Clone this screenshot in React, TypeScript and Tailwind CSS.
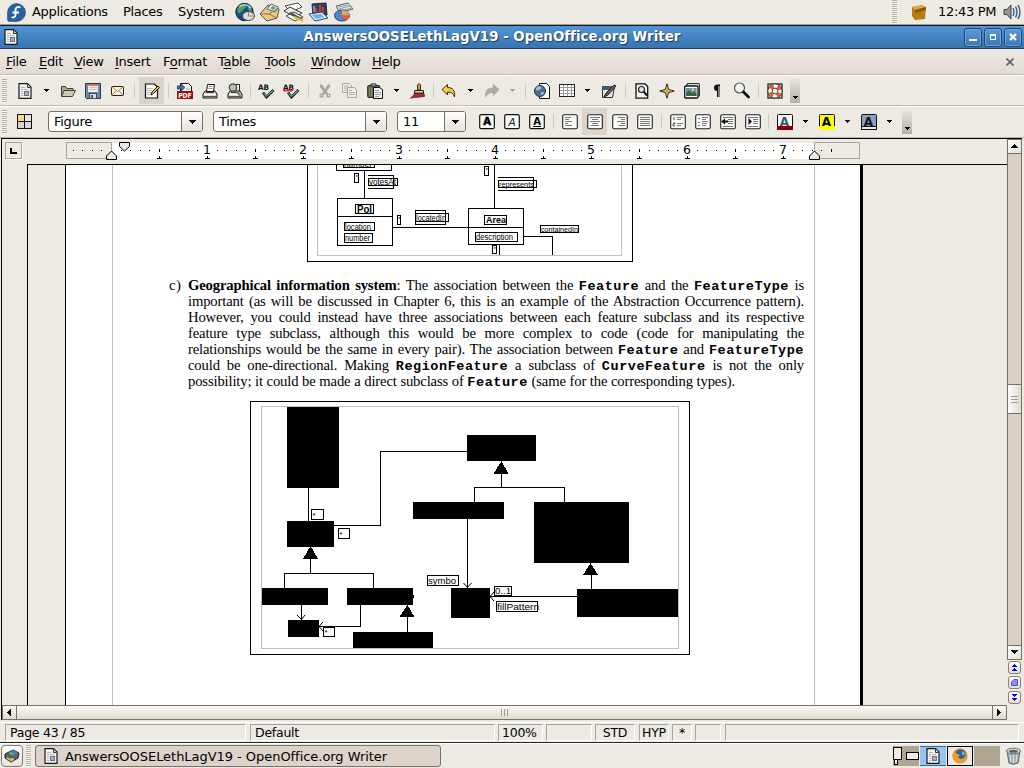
import React from "react";

type Kids = { children?: React.ReactNode };

/* ---------- small building blocks ---------- */

function Ico({ w = 16, h = 16, children }: Kids & { w?: number; h?: number }) {
  return (
    <svg width={w} height={h} viewBox={`0 0 ${w} ${h}`} className="shrink-0 block">
      {children}
    </svg>
  );
}

function Cell({ children, on = false }: Kids & { on?: boolean }) {
  return (
    <div className={on ? "w-[25px] h-[27px] shrink-0 flex items-center justify-center bg-[#dcd3c9]" : "w-[25px] h-[27px] shrink-0 flex items-center justify-center"}>
      {children}
    </div>
  );
}

function Sep({ className }: { className: string }) {
  return (
    <div className={`h-[15px] shrink-0 flex justify-center ${className}`}>
      <div className="w-px h-full bg-[#cfcac1]" />
    </div>
  );
}

function Arrow({ className, dim = false }: { className: string; dim?: boolean }) {
  return (
    <div className={`shrink-0 flex justify-center ${className}`}>
      <svg width="5" height="3" viewBox="0 0 5 3" shapeRendering="crispEdges">
        <path d="M0 0h5v1H4v1H3v1H2V2H1V1H0z" fill={dim ? "#aaa69e" : "#000"} />
      </svg>
    </div>
  );
}

function Grip({ className }: { className: string }) {
  return (
    <div className={`w-[5px] shrink-0 bg-[repeating-linear-gradient(to_bottom,#b5ab9d_0px,#b5ab9d_1px,#fbfaf7_1px,#fbfaf7_2px)] ${className}`} />
  );
}

function MoreTab() {
  return (
    <div className="w-[10px] h-[25px] shrink-0 bg-linear-to-b from-[#ebe8e1] to-[#b3afa7] flex flex-col justify-end items-center pb-[4px]">
      <Arrow className="w-[5px]" />
    </div>
  );
}

/* ---------- toolbar icons ---------- */

function DocIcon() {
  return (
    <Ico>
      <path d="M2 .6h8.500l3.500 3.500v11.300H2z" fill="#f3f3f0" stroke="#1a1a1a" strokeWidth="1.200" />
      <path d="M10.500 1v3.500h3" fill="#d5d5d0" stroke="#333" />
      <path d="M4 4.500h4M4 6.500h2M7 6.500h4M4 8.500h2M4 10.500h2M4 12.500h2" stroke="#b4b4b4" shapeRendering="crispEdges" />
      <rect x="7.500" y="8.500" width="4" height="4" fill="#a9adc0" stroke="#6b6f82" />
    </Ico>
  );
}

function OpenIcon() {
  return (
    <Ico>
      <path d="M1.500 13V3.500h4l1.500 2h6V7" fill="#a3a890" stroke="#3e4230" />
      <path d="M1.500 13.500L4 7.500h11.500l-3 6z" fill="#c9ccb4" stroke="#3e4230" />
    </Ico>
  );
}

function SaveIcon() {
  return (
    <Ico>
      <path d="M.5 .5h15v15h-14l-1-1z" fill="#6d8ba3" stroke="#293845" />
      <rect x="3" y="1" width="10" height="8" fill="#f2efeb" />
      <path d="M3 2h10" stroke="#d4705f" strokeWidth="2" />
      <path d="M4 4.500h8M4 6.500h8" stroke="#c4c4c4" />
      <rect x="4.500" y="10.500" width="7" height="5" fill="#d7dde1" stroke="#40515e" />
      <rect x="6" y="12" width="2" height="3" fill="#465764" />
    </Ico>
  );
}

function MailIcon() {
  return (
    <Ico w={14} h={12}>
      <rect x=".5" y="1.500" width="12" height="9" rx="1" fill="#fdf1d9" stroke="#2a2317" />
      <path d="M1 2l5.500 4.500L12 2M1 10l4-4M12 10L8 6" fill="none" stroke="#a98252" />
    </Ico>
  );
}

function EditIcon() {
  return (
    <Ico>
      <path d="M1.500 1h9l3 3v11h-12z" fill="#f8f8f6" stroke="#111" strokeWidth="1.200" />
      <path d="M3 5h6M3 7h5M3 9h4M3 11h3" stroke="#bbb" shapeRendering="crispEdges" />
      <path d="M7 12l1-3 6-6 1.500 1.500-6 6z" fill="#f4c430" stroke="#111" />
    </Ico>
  );
}

function PdfIcon() {
  return (
    <Ico>
      <path d="M3.500 8V.5h8l3 3V8" fill="#f6f6f3" stroke="#111" />
      <path d="M0 3h4V1l4 3.500L4 8V6H0z" fill="#3f6f9f" stroke="#16324e" strokeWidth=".7" />
      <path d="M9 6h4" stroke="#aaa" />
      <rect x="0" y="8" width="16" height="8" fill="#9c0d0d" />
      <text x="1.200" y="14.500" fontSize="7" fontWeight="700" fill="#fff" fontFamily="'DejaVu Sans', sans-serif" textLength="13.500" lengthAdjust="spacingAndGlyphs">PDF</text>
    </Ico>
  );
}

function PrinterBody() {
  return (
    <g>
      <path d="M3 8L1 11v4h14v-4l-2-3z" fill="#ddd9cf" stroke="#111" />
      <path d="M2 11.500h12" stroke="#fff" />
      <path d="M2 13.500h12" stroke="#55524b" />
      <path d="M4 9.500h8" stroke="#444" />
    </g>
  );
}

function PrintIcon() {
  return (
    <Ico>
      <PrinterBody />
      <path d="M4.500 8.500l1-7h7l-1 7z" fill="#fff" stroke="#111" />
      <path d="M6.500 3.500h4M6.500 5.500h4" stroke="#999" />
    </Ico>
  );
}

function PreviewIcon() {
  return (
    <Ico>
      <PrinterBody />
      <path d="M9 1.500h3.500v7" fill="#fff" stroke="#222" />
      <circle cx="6" cy="4.500" r="3.700" fill="#b9beb4" stroke="#4b4d49" strokeWidth="1.300" />
      <path d="M8.500 7.500l5 5" stroke="#77735f" strokeWidth="2" />
    </Ico>
  );
}

function SpellIcon({ auto = false }: { auto?: boolean }) {
  return (
    <Ico w={17} h={16}>
      <text x="0" y="6.500" fontSize="7.500" fontWeight="700" fill="#111" fontFamily="'DejaVu Sans', sans-serif" textLength="11" lengthAdjust="spacingAndGlyphs">AB</text>
      {auto && <path d="M0 8l1-1 1 1 1-1 1 1 1-1 1 1 1-1 1 1 1-1 1 1" fill="none" stroke="#d33" strokeWidth="1.300" />}
      <path d="M5 9.500l3.500 4.500L15.500 7" fill="none" stroke="#16251b" strokeWidth="2.800" />
      <path d="M5.500 10l3 3.300L15 7.500" fill="none" stroke="#7da288" strokeWidth="1.100" />
    </Ico>
  );
}

function CutIcon() {
  return (
    <Ico>
      <path d="M3 1l2.500 1L8 6l2.500-4L13 1v3L9.700 8.500l1.300 2h2.500v4H9.500V12L8 10.500 6.500 12v2.500h-4v-4H5l1.300-2L3 4z" fill="#aca89f" />
      <path d="M4.500 12v1M11.500 12v1" stroke="#fff" />
    </Ico>
  );
}

function CopyIcon() {
  return (
    <Ico w={17} h={17}>
      <g fill="#efede7" stroke="#a9a59d">
        <path d="M1.500 1.500h7l2 2v7h-9z" />
        <path d="M6.500 5.500h7l2 2v8h-9z" />
      </g>
      <path d="M3 4h5M3 6h3M3 8h3M8 8.500h3M8 10.500h6M8 12.500h6" stroke="#b5b1a9" />
    </Ico>
  );
}

function PasteIcon() {
  return (
    <Ico>
      <rect x=".7" y="2.500" width="12" height="12" rx="1" fill="#696a4e" stroke="#24251a" />
      <path d="M4 3V1h5v2z" fill="#ddd" stroke="#222" />
      <path d="M2.500 5v8M4.500 5v8" stroke="#85866a" />
      <path d="M6.500 4.500h6l3 2v9h-9z" fill="#f5f5f2" stroke="#111" />
      <path d="M8 7.500h4M8 9.500h6M8 11.500h6M8 13.500h4" stroke="#999" />
    </Ico>
  );
}

function BrushIcon() {
  return (
    <Ico>
      <path d="M7.500 7V2l1.500-1.500L10.500 2v5z" fill="#d8a040" stroke="#3f2d12" />
      <path d="M4.500 10V7.500h9V10z" fill="#e6ddb8" stroke="#222" />
      <path d="M4 10.500h10l.5 3-14 1.500L4 12z" fill="#a2302a" stroke="#4d1512" strokeWidth=".7" />
    </Ico>
  );
}

function UndoIcon() {
  return (
    <Ico>
      <path d="M1 6.500L6.500 1.500v3c5 0 8 3 7 9.500-1-3.500-3-5-7-5v3z" fill="#f5cb4c" stroke="#3c2c0a" strokeLinejoin="round" />
    </Ico>
  );
}

function RedoIcon() {
  return (
    <Ico>
      <path d="M15.500 6.500L9 .5V4.500C3 4.500 0 8 1.500 15 3 11.500 5 10 9 10v3.500z" fill="#b0aca4" />
    </Ico>
  );
}

function LinkIcon() {
  return (
    <Ico>
      <path d="M5.500 .5h7l3 3v12h-10z" fill="#fff" stroke="#111" />
      <circle cx="6" cy="8" r="5.500" fill="#4b7198" stroke="#1d3147" />
      <path d="M2 5c2-2 4-2 5-1s-1 3-2 3-2 1-3 0zM7 9c2 0 3 0 3 1s-2 2-3 2z" fill="#a8bccb" />
    </Ico>
  );
}

function TableIcon() {
  return (
    <Ico>
      <rect x=".5" y="1.500" width="15" height="12" fill="#fff" stroke="#222" />
      <path d="M1 4.500h14M1 7.500h14M1 10.500h14M4.500 2v11M8.500 2v11M12.500 2v11" stroke="#9aa0a4" />
    </Ico>
  );
}

function DrawIcon() {
  return (
    <Ico>
      <path d="M1.500 3.500h12l-2 11h-10z" fill="#e4eaec" stroke="#333" />
      <rect x="1.500" y="3" width="12" height="4" fill="#3c5d75" />
      <path d="M3 14l2-4 8-8 2 1-8 9z" fill="#6f604b" stroke="#222" />
    </Ico>
  );
}

function FindIcon() {
  return (
    <Ico>
      <path d="M2 .8h9l2.700 2.700v11.700H2z" fill="#f5f5f2" stroke="#111" strokeWidth="1.300" />
      <circle cx="7.500" cy="6.500" r="3" fill="#dde4e6" stroke="#222" strokeWidth="1.200" />
      <path d="M9.500 8.500l3.500 4" stroke="#111" strokeWidth="2" />
    </Ico>
  );
}

function NavigatorIcon() {
  return (
    <Ico>
      <path d="M8 .8L9.600 6.400 15.200 8 9.600 9.600 8 15.200 6.400 9.600 .8 8l5.600-1.600z" fill="#f3cf7d" stroke="#32270f" />
      <path d="M8 3v10M3 8h10" stroke="#a07c34" strokeWidth=".6" />
    </Ico>
  );
}

function GalleryIcon() {
  return (
    <Ico>
      <path d="M3 3V.7h12.300V13H14" fill="#fff" stroke="#111" />
      <rect x=".7" y="3" width="13.300" height="12" rx="1" fill="#fff" stroke="#111" strokeWidth="1.300" />
      <rect x="2" y="5" width="10.500" height="8" fill="#6f94ad" />
      <path d="M2 13v-3l3-3 3 3 2-1.500 2.500 2V13z" fill="#3a6336" />
      <circle cx="9" cy="6.500" r="1" fill="#ffd" />
    </Ico>
  );
}

function PilcrowIcon() {
  return (
    <Ico w={8} h={14}>
      <path d="M4.500 .5H7v1.500H6.500V13h-1V2H5v11H4V7C1.500 7 1 5 1 3.700S1.700 .5 4.500 .5z" fill="#111" />
    </Ico>
  );
}

function ZoomIcon() {
  return (
    <Ico w={17} h={17}>
      <circle cx="6.500" cy="6" r="5" fill="#f4f6f6" stroke="#555" strokeWidth="1.200" />
      <path d="M4 4l2-1" stroke="#fff" strokeWidth="2" />
      <path d="M10.500 10l5 5" stroke="#111" strokeWidth="2.800" strokeLinecap="round" />
    </Ico>
  );
}

function HelpIcon() {
  return (
    <Ico>
      <rect x="1" y="1" width="14" height="14" fill="none" stroke="#333" strokeWidth="1.400" />
      <circle cx="8" cy="8" r="5" fill="none" stroke="#222" strokeWidth="5" />
      <circle cx="8" cy="8" r="5" fill="none" stroke="#f4f0ea" strokeWidth="3.600" />
      <circle cx="8" cy="8" r="5" fill="none" stroke="#dd5b3c" strokeWidth="3.600" strokeDasharray="3.927 3.927" strokeDashoffset="-1.960" />
    </Ico>
  );
}

function StylesIcon() {
  return (
    <Ico w={15} h={15}>
      <rect x="0" y="0" width="15" height="15" fill="#111" />
      <rect x="1" y="1" width="6" height="6" fill="#fbdc6e" />
      <rect x="8" y="1" width="6" height="6" fill="#e5e5e2" />
      <rect x="1" y="8" width="6" height="6" fill="#d5d5d2" />
      <rect x="8" y="8" width="6" height="6" fill="#d5d5d2" />
    </Ico>
  );
}

function LetterIcon({ kind }: { kind: "b" | "i" | "u" }) {
  return (
    <Ico>
      <rect x=".7" y=".7" width="14.600" height="14" rx="1.500" fill="#fbfbf9" stroke="#111" strokeWidth="1.200" />
      {kind === "b" && <text x="8" y="11.300" textAnchor="middle" fontSize="10" fontWeight="700" stroke="#000" strokeWidth=".5" fontFamily="'DejaVu Sans', sans-serif">A</text>}
      {kind === "i" && <text x="8" y="11.500" textAnchor="middle" fontSize="10.500" fontStyle="italic" fill="#222" fontFamily="'DejaVu Sans', sans-serif">A</text>}
      {kind === "u" && <text x="8" y="10.500" textAnchor="middle" fontSize="10" fontWeight="700" fontFamily="'DejaVu Sans', sans-serif">A</text>}
      {kind === "u" && <path d="M4 12.500h8" stroke="#000" />}
    </Ico>
  );
}

function LinesIcon({ d, extra }: { d: string; extra?: React.ReactNode }) {
  return (
    <Ico>
      <rect x=".7" y=".7" width="14.600" height="14" rx="1.500" fill="#fbfbf9" stroke="#222" strokeWidth="1.100" />
      <path d={d} stroke="#777" shapeRendering="crispEdges" />
      {extra}
    </Ico>
  );
}

function ColorIcon({ box, bar, ink, edge }: { box: string; bar: string; ink: string; edge: string }) {
  return (
    <Ico w={16} h={16}>
      <rect x=".5" y=".5" width="15" height="14" rx="1" fill={box} stroke="#111" />
      <text x="7.500" y="11.500" textAnchor="middle" fontSize="12" fontWeight="700" fill={ink} fontFamily="'DejaVu Sans', sans-serif">A</text>
      <rect x=".5" y="12.500" width="15" height="3" fill={bar} stroke={edge} />
    </Ico>
  );
}

/* ---------- desktop panel ---------- */

function FedoraLogo() {
  return (
    <Ico w={19} h={19}>
      <path d="M9.500 .5a9 9 0 1 1 0 18H2.500q-2 0-2-2V9.500a9 9 0 0 1 9-9z" fill="#285f9f" stroke="#1c467c" strokeWidth=".6" />
      <path d="M13.500 4.500c-3-1.500-5 0-5 2.500v5c0 2-2 3.200-4 2M5.500 9.500h6.500" fill="none" stroke="#fff" strokeWidth="1.900" />
    </Ico>
  );
}

function TopPanel() {
  return (
    <div className="h-[24px] shrink-0 flex items-center bg-[#edeae3] text-[13px] tracking-[-0.3px] pl-[7px] pr-[3px]">
      <FedoraLogo />
      <span className="w-[91px] ml-[6px]">Applications</span>
      <span className="w-[55px]">Places</span>
      <span className="w-[57px]">System</span>
      <div className="flex gap-[3px]">
        <Ico w={21} h={20}>
          <circle cx="9.500" cy="10" r="8.700" fill="#174e83" stroke="#14283a" />
          <path d="M2 8c2-5 6-6 8-5s2 2-1 4-3 5-6 4zM12 3c4 1 5 4 5 7l-3-1z" fill="#55a060" />
          <path d="M4 5c4-3 9-3 12 1" fill="none" stroke="#b7d8e6" strokeWidth="1.500" />
          <ellipse cx="13.500" cy="14" rx="6" ry="4.500" fill="#d9ddd9" stroke="#404644" />
          <path d="M13.500 10v4h5" fill="none" stroke="#888" />
        </Ico>
        <Ico w={21} h={20}>
          <path d="M1 12L9 3l11 4-2 9-10 3z" fill="#eac88d" stroke="#5d4a2b" />
          <path d="M8 7l4-5 7 3-3 5z" fill="#e3ecea" stroke="#5e6a67" />
          <path d="M11 6l3-2 3 2-3 2z" fill="#5e9c9c" />
          <path d="M1 12l9 0 8 4M10 12l8-5" fill="none" stroke="#92703c" />
        </Ico>
        <Ico w={22} h={20}>
          <path d="M2 4L15 1l4 4-11 5z" fill="#fff" stroke="#444" />
          <path d="M1 9l6-4 12 6-7 4z" fill="#e8e8e4" stroke="#333" />
          <path d="M3 14l8-4 9 5-8 4z" fill="#fbfbf9" stroke="#444" />
          <path d="M5 12l13 6 2-1L8 10z" fill="#555" />
          <path d="M11 15l9 4" stroke="#eabf2b" strokeWidth="2" />
        </Ico>
        <Ico w={21} h={20}>
          <path d="M4 2l14-1 1 12-14 1z" fill="#32405f" stroke="#1c263c" />
          <path d="M8 6v6M12 3v9M15 5v7" stroke="#bd4040" strokeWidth="2" />
          <path d="M6 4v6" stroke="#7993bd" strokeWidth="2" />
          <path d="M1 12l13-2 6 6-13 3z" fill="#d6e7f6" stroke="#32475d" />
          <path d="M4 13l9-1 3 3-8 2z" fill="#65aef0" />
        </Ico>
        <Ico w={22} h={20}>
          <path d="M4 4l12-3 5 6-13 4z" fill="#e0e4ec" stroke="#5a6471" />
          <path d="M6 5l10-2M7 7l11-3M8 9l12-3" stroke="#8e9cae" />
          <ellipse cx="10" cy="13.500" rx="7.500" ry="5.500" fill="#5587c6" stroke="#26466f" />
          <path d="M10 13.500V8a7.500 5.500 0 0 1 7.500 5.500z" fill="#f19f53" />
          <path d="M10 13.500h7.500a7 5.500 0 0 1-5 5z" fill="#e65a36" />
        </Ico>
      </div>
      <div className="grow" />
      <Grip className="h-[24px]" />
      <div className="w-[14px]" />
      <Ico w={16} h={17}>
        <path d="M1 3l10-2 4 2-1 12-10 1-3-4z" fill="#b67a14" />
        <path d="M1 3l10-2 4 2-11 3z" fill="#e1a93e" />
        <path d="M4 6l11-3v3L4 9z" fill="#8b560b" />
      </Ico>
      <span className="ml-[11px] w-[65px] whitespace-nowrap">12:43 PM</span>
      <Ico w={18} h={18}>
        <path d="M1 6.500h3l4-4.500v14l-4-4.500H1z" fill="#949893" stroke="#444" />
        <path d="M10 5q2 4 0 8M12.500 3.500q3 5.500 0 11M15 2q4 7 0 14" fill="none" stroke="#315c91" strokeWidth="1.400" />
      </Ico>
    </div>
  );
}

/* ---------- window chrome ---------- */

function WinButton({ children }: Kids) {
  return (
    <div className="w-[18px] h-[19px] rounded-[3px] border border-[#20486e] bg-linear-to-b from-[#5b99d9] to-[#3b78b3] flex items-center justify-center shadow-[inset_0_0_0_1px_#6ba5dd]">
      {children}
    </div>
  );
}

function TitleBar() {
  return (
    <div className="h-[24px] shrink-0 border-t border-b border-t-[#101a24] border-b-[#23405e] bg-linear-to-b from-[#5294d8] to-[#3974ae] flex items-center pl-[3px] pr-[2px]">
      <DocIcon />
      <div className="grow pl-px text-center font-bold text-white text-[13.33px] tracking-[0.03px] leading-[20px] [text-shadow:1px_1px_1px_#1b3c60]">
        AnswersOOSELethLagV19 - OpenOffice.org Writer
      </div>
      <div className="flex gap-[2px]">
        <WinButton>
          <div className="w-[8px] h-[2px] bg-white mt-[6px]" />
        </WinButton>
        <WinButton>
          <div className="w-[6px] h-[6px] border border-t-2 border-white" />
        </WinButton>
        <WinButton>
          <Ico w={8} h={8}>
            <path d="M1 1l6 6M7 1L1 7" stroke="#fff" strokeWidth="2.300" />
          </Ico>
        </WinButton>
      </div>
    </div>
  );
}

function Menu({ pre = "", u, rest, className }: { pre?: string; u: string; rest: string; className: string }) {
  return (
    <span className={`shrink-0 whitespace-nowrap ${className}`}>
      {pre}
      <span className="underline underline-offset-2">{u}</span>
      {rest}
    </span>
  );
}

function MenuBar() {
  return (
    <div className="h-[26px] shrink-0 flex items-center pl-[6px] text-[13px] tracking-[-0.3px] bg-linear-to-b from-[#edeae5] to-[#e2dad2] border-b border-[#c4bcac]">
      <Menu u="F" rest="ile" className="w-[33px]" />
      <Menu u="E" rest="dit" className="w-[35px]" />
      <Menu u="V" rest="iew" className="w-[41px]" />
      <Menu u="I" rest="nsert" className="w-[48px]" />
      <Menu pre="F" u="o" rest="rmat" className="w-[55px]" />
      <Menu pre="T" u="a" rest="ble" className="w-[47px]" />
      <Menu u="T" rest="ools" className="w-[46px]" />
      <Menu u="W" rest="indow" className="w-[61px]" />
      <Menu u="H" rest="elp" className="w-[30px]" />
      <div className="grow" />
      <div className="mr-[10px]">
        <Ico w={8} h={8}>
          <path d="M.5 .5l7 7M7.500 .5l-7 7" stroke="#5c6172" strokeWidth="1.600" />
        </Ico>
      </div>
    </div>
  );
}

function StandardBar() {
  return (
    <div className="h-[31px] shrink-0 flex items-center border-t border-white border-b border-b-[#c4bcac] bg-[#edeae3] pl-[2px]">
      <Grip className="h-[24px] mr-[5px]" />
      <Cell><DocIcon /></Cell>
      <Arrow className="w-[18px]" />
      <Cell><OpenIcon /></Cell>
      <Cell><SaveIcon /></Cell>
      <Cell><MailIcon /></Cell>
      <Sep className="w-[9px]" />
      <Cell on><EditIcon /></Cell>
      <Sep className="w-[8px]" />
      <Cell><PdfIcon /></Cell>
      <Cell><PrintIcon /></Cell>
      <Cell><PreviewIcon /></Cell>
      <Sep className="w-[7px]" />
      <Cell><SpellIcon /></Cell>
      <Cell><SpellIcon auto /></Cell>
      <Sep className="w-[8px]" />
      <Cell><CutIcon /></Cell>
      <Cell><CopyIcon /></Cell>
      <Cell><PasteIcon /></Cell>
      <Arrow className="w-[18px]" />
      <Cell><BrushIcon /></Cell>
      <Sep className="w-[6px]" />
      <Cell><UndoIcon /></Cell>
      <Arrow className="w-[18px]" />
      <Cell><RedoIcon /></Cell>
      <Arrow className="w-[17px]" dim />
      <Sep className="w-[8px]" />
      <Cell><LinkIcon /></Cell>
      <Cell><TableIcon /></Cell>
      <Arrow className="w-[17px]" />
      <Cell><DrawIcon /></Cell>
      <Sep className="w-[8px]" />
      <Cell><FindIcon /></Cell>
      <Cell><NavigatorIcon /></Cell>
      <Cell><GalleryIcon /></Cell>
      <Cell><PilcrowIcon /></Cell>
      <Cell><ZoomIcon /></Cell>
      <Sep className="w-[8px]" />
      <Cell><HelpIcon /></Cell>
      <div className="w-[3px]" />
      <MoreTab />
    </div>
  );
}

function Combo({ text, className }: { text: string; className: string }) {
  return (
    <div className={`h-[21px] shrink-0 flex rounded-[3px] border border-[#7b7060] bg-white overflow-hidden ${className}`}>
      <span className="grow pl-[5px] text-[13px] tracking-[-0.3px] leading-[19px]">{text}</span>
      <div className="w-[21px] shrink-0 border-l border-[#7b7060] bg-linear-to-b from-white to-[#e6e1da] flex items-center">
        <svg width="20" height="5" viewBox="0 0 20 5" shapeRendering="crispEdges">
          <path d="M7 1h7v1h-1v1h-1v1h-1v1h-1V4H9V3H8V2H7z" fill="#000" />
        </svg>
      </div>
    </div>
  );
}

function FormatBar() {
  return (
    <div className="h-[31px] shrink-0 flex items-center border-t border-white bg-[#edeae3] pl-[2px] pb-px">
      <Grip className="h-[24px] mr-[5px]" />
      <Cell><StylesIcon /></Cell>
      <Combo text="Figure" className="w-[155px] ml-[11px]" />
      <Combo text="Times" className="w-[174px] ml-[10px]" />
      <Combo text="11" className="w-[69px] ml-[10px]" />
      <div className="w-[8px]" />
      <Cell><LetterIcon kind="b" /></Cell>
      <Cell><LetterIcon kind="i" /></Cell>
      <Cell><LetterIcon kind="u" /></Cell>
      <Sep className="w-[8px]" />
      <Cell><LinesIcon d="M3 3.500h6M3 5.500h4M3 7.500h7M3 9.500h3M3 11.500h7" /></Cell>
      <Cell on><LinesIcon d="M3 3.500h10M5 5.500h6M3 7.500h10M5 9.500h6M4 11.500h8" /></Cell>
      <Cell><LinesIcon d="M6 3.500h7M9 5.500h4M5 7.500h8M9 9.500h4M7 11.500h6" /></Cell>
      <Cell><LinesIcon d="M3 3.500h10M3 5.500h10M3 7.500h10M3 9.500h10M3 11.500h10" /></Cell>
      <Sep className="w-[8px]" />
      <Cell><LinesIcon d="M7 3.500h6M7 5.500h4M7 9.500h6M7 11.500h4" extra={<path d="M4 3v3M3 9h2v1H3v2h2" fill="none" stroke="#555" />} /></Cell>
      <Cell><LinesIcon d="M7 3.500h6M7 5.500h4M7 7.500h6M7 9.500h5M7 11.500h4M3 4.500h2M3 8.500h2M3 11.500h2" /></Cell>
      <Cell><LinesIcon d="M3 3.500h10M8 5.500h5M8 7.500h5M8 9.500h5M3 12.500h10" extra={<path d="M1 7.500L5 4.500v2h3v2H5v2z" fill="#111" />} /></Cell>
      <Cell><LinesIcon d="M3 3.500h10M8 5.500h5M8 7.500h5M8 9.500h5M3 12.500h10" extra={<path d="M7 7.500L3.500 4v7z" fill="#111" />} /></Cell>
      <Sep className="w-[7px]" />
      <Cell><ColorIcon box="#f8f8f6" bar="#8b0000" ink="#3e5878" edge="#8b0000" /></Cell>
      <Arrow className="w-[17px]" />
      <Cell><ColorIcon box="#ffff00" bar="#ffff00" ink="#000" edge="#ffff00" /></Cell>
      <Arrow className="w-[17px]" />
      <Cell><ColorIcon box="#85a1c4" bar="#ece9e2" ink="#111" edge="#111" /></Cell>
      <Arrow className="w-[17px]" />
      <div className="w-[4px]" />
      <MoreTab />
    </div>
  );
}

/* ---------- ruler ---------- */

const ORIGIN = 111;
const RULER_STEPS = Array.from({ length: 80 }, (_, i) => i - 4);

function Ruler() {
  return (
    <div className="h-[25px] shrink-0 flex items-start">
      <div className="w-[17px] h-[17px] ml-[3px] mt-[3px] border border-[#aaa69d] shadow-[1px_1px_0_#fff] flex items-center justify-center">
        <div className="w-[7px] h-[6px] border-l-2 border-b-2 border-black" />
      </div>
      <svg width="796" height="25" viewBox="66 139 796 25" className="ml-[44px]" shapeRendering="crispEdges">
        <rect x="111" y="143" width="704" height="16" fill="#fff" />
        <rect x="66.500" y="142.500" width="45" height="16" fill="#edeae3" stroke="#a9a59d" />
        <rect x="814.500" y="142.500" width="45" height="16" fill="#edeae3" stroke="#a9a59d" />
        {RULER_STEPS.map((k) => {
          const x = Math.round(ORIGIN + k * 9.6);
          if (k === 0 || x > 852) return null;
          if (k % 10 === 0)
            return (
              <text key={k} x={x} y="154" textAnchor="middle" fontSize="12.500" shapeRendering="auto" fontFamily="'DejaVu Sans', sans-serif">
                {k / 10}
              </text>
            );
          return k % 5 === 0 ? (
            <rect key={k} x={x} y="149" width="1" height="3" />
          ) : (
            <rect key={k} x={x} y="150" width="1" height="1" />
          );
        })}
        {Array.from({ length: 14 }, (_, i) => 159 + i * 48).map((x) => (
          <path key={x} d={`M${x - 2} 158h5v1h-5zM${x} 156h1v2h-1z`} />
        ))}
        <g fill="#edeae3" stroke="#000" shapeRendering="auto">
          <path d="M119.500 142.500h10v4l-5 4.500-5-4.500z" />
          <path d="M106.500 159.500v-3.500l5-5 5 5v3.500z" />
          <path d="M809.500 159.500v-3.500l5-5 5 5v3.500z" />
        </g>
      </svg>
    </div>
  );
}

/* ---------- figures inside the document ---------- */

function Label({ x, y, w, t, s = 8, b = false }: { x: number; y: number; w: number; t: string; s?: number; b?: boolean }) {
  return (
    <text x={x} y={y} fontSize={s} fontWeight={b ? 700 : 400} textLength={w} lengthAdjust="spacingAndGlyphs" fontFamily="'Liberation Sans', sans-serif" fill="#000">
      {t}
    </text>
  );
}

function PollFigure() {
  return (
    <svg width="326" height="97" viewBox="307 165 326 97" className="block ml-[241px]">
      <g fill="none" stroke="#000" shapeRendering="crispEdges">
        <path d="M317.500 165v90.500h304V165" stroke="#c0c0c0" />
        <path d="M307.500 165v96.500h325V165" />
        <path d="M336.500 165v5.500h55V165M343.500 165v2.500h31V165" />
        <path d="M364.500 170v28M494.500 165v43M392 227.500h76M523 236.500h29.500V255M499.500 244v11" />
        <rect x="354.500" y="173.500" width="4" height="9" />
        <path d="M368 175.500h25.500v13H368M368.500 178.500h29v7h-29z" />
        <rect x="337.500" y="198.500" width="55" height="47" />
        <path d="M337 216.500h55" />
        <rect x="355.500" y="204.500" width="18" height="9" />
        <rect x="344.500" y="222.500" width="30" height="8" />
        <rect x="344.500" y="233.500" width="28" height="9" />
        <rect x="397.500" y="215.500" width="3" height="9" />
        <rect x="415.500" y="210.500" width="30" height="14" />
        <rect x="415.500" y="213.500" width="33" height="8" />
        <rect x="468.500" y="208.500" width="55" height="36" />
        <path d="M468 227.500h55" />
        <rect x="484.500" y="215.500" width="22" height="9" />
        <rect x="475.500" y="232.500" width="42" height="9" />
        <rect x="484.500" y="166.500" width="4" height="9" />
        <path d="M498 177.500h35.500v13H498M498.500 180.500h38v7h-38z" />
        <rect x="540.500" y="225.500" width="38" height="7" />
        <rect x="492.500" y="245.500" width="4" height="8" />
      </g>
      <Label x={344} y={166.500} w={28} t="number" />
      <Label x={355.500} y={179} w={2.500} t="*" s={6} />
      <Label x={369} y={185} w={27} t="votesAt" s={8.500} />
      <Label x={357} y={212.500} w={15} t="Pol" s={10} b />
      <Label x={345} y={229.500} w={26} t="location" s={8.500} />
      <Label x={345} y={241} w={25} t="number" s={8.500} />
      <Label x={398} y={221} w={2.500} t="*" s={6} />
      <Label x={416} y={220.500} w={30} t="locatedIn" s={8.500} />
      <Label x={486} y={223} w={20} t="Area" s={9.500} b />
      <Label x={476} y={240} w={37} t="description" s={8.500} />
      <Label x={485.500} y={172} w={2.500} t="*" s={6} />
      <Label x={499} y={187} w={35} t="represents" />
      <Label x={541} y={232} w={37} t="containedIn" />
      <Label x={493.500} y={251} w={2.500} t="*" s={6} />
    </svg>
  );
}

function FeatureFigure() {
  return (
    <svg width="440" height="254" viewBox="250 401 440 254" className="block ml-[184px] mt-[12px]">
      <g fill="none" stroke="#000" shapeRendering="crispEdges">
        <rect x="250.500" y="401.500" width="439" height="253" />
        <rect x="261.500" y="406.500" width="417" height="242" stroke="#c0c0c0" />
        <path d="M308.500 488v33M334 525.500h46.500v-74H467M310.500 558v15M284.500 588v-14.500h89V588M301.500 605v15M360.500 605v21.500H319M407.500 615v17" />
        <path d="M501.500 473v14M474.500 502v-14.500h90V502M467.500 519v69M591.500 574v15M490 596.500h87" />
        <rect x="311.500" y="509.500" width="12" height="10" />
        <rect x="338.500" y="528.500" width="11" height="10" />
        <rect x="323.500" y="627.500" width="11" height="9" />
        <rect x="427.500" y="575.500" width="31" height="10" />
        <rect x="494.500" y="586.500" width="17" height="9" />
        <rect x="496.500" y="601.500" width="41" height="10" />
      </g>
      <g fill="none" stroke="#000">
        <path d="M297 615l4.500 4.500L305 615M323 622l-4 4.500 4 4.500M463.500 583l4 4.500 4-4.500M494 592l-4 4.500 4 4.500" />
      </g>
      <g fill="#000" shapeRendering="crispEdges">
        <path d="M287 407h52v81h-52zM287 521h47v26h-47zM262 588h66v17h-66zM347 588h66v17h-66zM288 620h31v17h-31zM353 632h80v16h-80z" />
        <path d="M467 435h69v26h-69zM413 502h91v17h-91zM534 502h95v61h-95zM451 588h39v30h-39zM577 589h101v28H577zM413 595h1v3h-1z" />
        <path d="M310.500 546l7.500 13h-15zM407.500 605l7 12h-15zM501.500 461l7 13h-15zM590.500 563l7.500 12h-15z" />
      </g>
      <Label x={312.500} y={517.500} w={3} t="*" s={8} />
      <Label x={339.500} y={536.500} w={3} t="*" s={8} />
      <Label x={324.500} y={634.500} w={3} t="*" s={8} />
      <Label x={428} y={584} w={28} t="symbo" s={9.500} />
      <Label x={495} y={594} w={16} t="0..1" s={9.500} />
      <Label x={497} y={610} w={42} t="fillPattern" s={9.500} />
    </svg>
  );
}

function Code({ children }: Kids) {
  return <b className="font-['Liberation_Mono','Courier_New',monospace] text-[13.5px] tracking-[0.54px] leading-[14px]">{children}</b>;
}

function Line({ children, className = "w-[616px]" }: Kids & { className?: string }) {
  return <div className={`h-[16px] leading-[16px] whitespace-nowrap [text-align-last:justify] ${className}`}>{children}</div>;
}

function Paragraph() {
  return (
    <div className="mt-[15px] ml-[102px] flex text-[14.67px] tracking-[-0.15px] font-['Liberation_Serif','Times_New_Roman',serif] text-black">
      <div className="w-[20px] pl-px leading-[16px] tracking-[0.5px]">c)</div>
      <div>
        <Line><b>Geographical information system</b>: The association between the <Code>Feature</Code> and the <Code>FeatureType</Code> is</Line>
        <Line>important (as will be discussed in Chapter 6, this is an example of the Abstraction Occurrence pattern).</Line>
        <Line>However, you could instead have three associations between each feature subclass and its respective</Line>
        <Line>feature type subclass, although this would be more complex to code (code for manipulating the</Line>
        <Line>relationships would be the same in every pair). The association between <Code>Feature</Code> and <Code>FeatureType</Code></Line>
        <Line>could be one-directional. Making <Code>RegionFeature</Code> a subclass of <Code>CurveFeature</Code> is not the only</Line>
        <Line className="w-[547px]">possibility; it could be made a direct subclass of <Code>Feature</Code> (same for the corresponding types).</Line>
      </div>
    </div>
  );
}

function DocumentView() {
  return (
    <div className="h-[541px] shrink-0 flex">
      <div className="w-[25px] shrink-0" />
      <div className="w-[980px] shrink-0 flex border-l border-t border-black">
        <div className="w-[37px] shrink-0" />
        <div className="w-[798px] shrink-0 bg-white border-l border-r-[3px] border-black overflow-hidden flex bg-[linear-gradient(#c0c0c0,#c0c0c0),linear-gradient(#c0c0c0,#c0c0c0)] bg-[length:1px_100%] bg-no-repeat bg-[position:46px_0px,748px_0px]">
          <div className="shrink-0">
            <PollFigure />
            <Paragraph />
            <FeatureFigure />
          </div>
        </div>
      </div>
    </div>
  );
}

/* ---------- scroll bars ---------- */

function Tri({ dir }: { dir: "up" | "down" | "left" | "right" }) {
  const d = {
    up: "M3 0h1v1h1v1h1v1h1v1H0V3h1V2h1V1h1z",
    down: "M0 0h7v1H6v1H5v1H4v1H3V3H2V2H1V1H0z",
    left: "M0 3h1V2h1V1h1V0h1v7H3V6H2V5H1V4H0z",
    right: "M0 0h1v1h1v1h1v1h1v1H3v1H2v1H1v1H0z",
  }[dir];
  return (
    <svg width="7" height="7" viewBox={dir === "up" || dir === "down" ? "0 -1 7 7" : "-1 0 7 7"} shapeRendering="crispEdges">
      <path d={d} />
    </svg>
  );
}

function PageButton({ children }: Kids) {
  return (
    <div className="w-[13px] h-[13px] rounded-[3px] border border-[#8a7e6e] bg-linear-to-b from-white to-[#e4dfd7] flex items-center justify-center">
      {children}
    </div>
  );
}

function VerticalScroll() {
  return (
    <div className="w-[15px] shrink-0 flex flex-col items-center">
      <div className="w-[15px] h-[521px] shrink-0 flex flex-col border border-[#7b7060] bg-[#d9d1c5]">
        <div className="h-[14px] shrink-0 border-b border-[#7b7060] bg-linear-to-br from-white to-[#e4dfd7] flex items-center justify-center">
          <Tri dir="up" />
        </div>
        <div className="h-[230px] shrink-0" />
        <div className="h-[30px] shrink-0 border-y border-[#7b7060] bg-linear-to-r from-white to-[#e0dad1] flex flex-col items-center justify-center gap-[2px]">
          <div className="w-[7px] h-px bg-[#a59b8d]" />
          <div className="w-[7px] h-px bg-[#a59b8d]" />
          <div className="w-[7px] h-px bg-[#a59b8d]" />
        </div>
        <div className="grow" />
        <div className="h-[14px] shrink-0 border-t border-[#7b7060] bg-linear-to-br from-white to-[#e4dfd7] flex items-center justify-center">
          <Tri dir="down" />
        </div>
      </div>
      <div className="mt-px flex flex-col gap-[2px]">
        <PageButton>
          <svg width="5" height="8" viewBox="0 0 5 8" shapeRendering="crispEdges">
            <path d="M2 0h1v1h1v1h1v1H0V2h1V1h1zM2 4h1v1h1v1h1v1H0V6h1V5h1z" fill="#00f" />
          </svg>
        </PageButton>
        <PageButton>
          <svg width="7" height="7" viewBox="0 0 7 7">
            <path d="M.5 6.500V3L3 .5h3.500v6z" fill="#8d91ef" stroke="#4c4fd0" />
          </svg>
        </PageButton>
        <PageButton>
          <svg width="5" height="8" viewBox="0 0 5 8" shapeRendering="crispEdges">
            <path d="M0 0h5v1H4v1H3v1H2V2H1V1H0zM0 4h5v1H4v1H3v1H2V6H1V5H0z" fill="#00f" />
          </svg>
        </PageButton>
      </div>
    </div>
  );
}

function HorizontalScroll() {
  return (
    <div className="h-[15px] w-[1005px] shrink-0 flex border border-[#7b7060] bg-linear-to-b from-[#fbfaf8] to-[#dfd9d0]">
      <div className="w-[14px] shrink-0 border-r border-[#7b7060] flex items-center justify-center">
        <Tri dir="left" />
      </div>
      <div className="grow flex items-center justify-center gap-[2px]">
        <div className="w-px h-[7px] bg-[#a59b8d]" />
        <div className="w-px h-[7px] bg-[#a59b8d]" />
        <div className="w-px h-[7px] bg-[#a59b8d]" />
      </div>
      <div className="w-[14px] shrink-0 border-l border-[#7b7060] flex items-center justify-center">
        <Tri dir="right" />
      </div>
    </div>
  );
}

/* ---------- status bar and task bar ---------- */

function Field({ text = "", className }: { text?: string; className: string }) {
  return (
    <div className={`h-[17px] shrink-0 border border-[#aaa59b] border-r-white border-b-white text-[12.5px] tracking-[-0.25px] leading-[16px] whitespace-nowrap ${className}`}>
      {text}
    </div>
  );
}

function StatusBar() {
  return (
    <div className="h-[20px] shrink-0 flex items-start border-t border-white pt-px pl-[5px]">
      <Field text="Page 43 / 85" className="w-[241px] pl-[4px]" />
      <Field text="Default" className="w-[245px] ml-[4px] pl-[4px]" />
      <Field text="100%" className="w-[45px] ml-[3px] pl-[3px]" />
      <Field className="w-[46px] ml-[3px]" />
      <Field text="STD" className="w-[40px] ml-[3px] text-center" />
      <Field text="HYP" className="w-[30px] ml-[4px] text-center" />
      <Field text="*" className="w-[20px] ml-[3px] text-center" />
      <Field className="w-[26px] ml-[3px]" />
      <Field className="w-[294px] ml-[4px]" />
    </div>
  );
}

function TaskBar() {
  return (
    <div className="h-[26px] shrink-0 flex items-center border-t border-[#23282c] bg-[#edeae3] shadow-[inset_0_1px_0_#fff] pt-px">
      <div className="w-[22px] h-[22px] shrink-0 ml-px rounded-[4px] border border-[#85796a] bg-linear-to-b from-white to-[#e7e2db] flex items-center justify-center">
        <Ico>
          <path d="M1 6l8-4 6 3-1 5-7 4-6-4z" fill="#5d6563" stroke="#252b29" />
          <path d="M4 5l5-3 5 3-5 3z" fill="#3f80b8" />
          <path d="M2 8l4 2 3-1 2 3-4 2-5-3z" fill="#d5b77a" stroke="#333" strokeWidth=".7" />
          <path d="M5 5l3-1 2 2-3 1z" fill="#6cae5f" />
        </Ico>
      </div>
      <Grip className="h-[22px] ml-[3px]" />
      <div className="w-[406px] h-[22px] shrink-0 ml-[4px] rounded-[3px] border border-[#7b7060] bg-[#dcd4ca] flex items-center pl-[7px] text-[13px] tracking-[-0.04px]">
        <DocIcon />
        <span className="ml-[6px] pt-[2px] whitespace-nowrap">AnswersOOSELethLagV19 - OpenOffice.org Writer</span>
      </div>
      <div className="grow" />
      <div className="h-[20px] flex gap-px shrink-0">
        <div className="w-[26px] bg-[#b0a593]">
          <svg width="26" height="20" viewBox="0 0 26 20" shapeRendering="crispEdges">
            <g fill="#edeae3" stroke="#000">
              <rect x=".5" y="1.500" width="8" height="12" />
              <rect x="1.500" y="13.500" width="3" height="5" />
              <rect x="13.500" y="6.500" width="12" height="7" />
            </g>
          </svg>
        </div>
        <div className="w-[26px] bg-[#95c5f2] border-y border-[#356899] flex items-center justify-center"><DocIcon /></div>
        <div className="w-[26px] bg-[#edeae3] border border-black flex items-center justify-center">
          <Ico>
            <circle cx="8" cy="8" r="7.500" fill="#e37a1d" />
            <circle cx="8.500" cy="6.500" r="5" fill="#2b67a5" />
            <path d="M1 5c1-1 3-1 4 1l3 1-2 2c1 2 4 3 7 0 1-1 1-3 1-5 3 5 0 11-6 11.500C3 15.500-.5 11 1 5z" fill="#f19c2a" />
            <path d="M10 3l3 2-1 3-2-2z" fill="#6fb4dc" />
          </Ico>
        </div>
        <div className="w-[26px] bg-[#b0a593]" />
      </div>
      <div className="ml-[5px] mr-[2px]">
        <Ico w={17} h={18}>
          <path d="M2 4l2 12q4.500 2.500 9 0l2-12z" fill="#a7afb1" stroke="#5d6567" />
          <ellipse cx="8.500" cy="4" rx="7" ry="2.800" fill="#d9dedf" stroke="#666e70" />
          <ellipse cx="8.500" cy="4.300" rx="4.500" ry="1.500" fill="#596163" />
          <path d="M5 8l1 7M8.500 8v8M12 8l-1 7" stroke="#e0e5e6" />
        </Ico>
      </div>
    </div>
  );
}

export default function App() {
  return (
    <div className="w-[1024px] h-[768px] overflow-hidden flex flex-col bg-[#edeae3] text-black font-['DejaVu_Sans',Verdana,sans-serif]">
      <TopPanel />
      <div className="h-px shrink-0 bg-[#a79f84]" />
      <TitleBar />
      <MenuBar />
      <StandardBar />
      <FormatBar />
      <div className="h-px shrink-0 bg-[#bdb6a9]" />
      <div className="h-[584px] shrink-0 flex pl-px">
        <div className="w-[1006px] h-[582px] shrink-0 border-l border-t border-black flex flex-col">
          <Ruler />
          <DocumentView />
          <HorizontalScroll />
        </div>
        <div className="border-t border-black h-px shrink-0">
          <VerticalScroll />
        </div>
      </div>
      <StatusBar />
      <TaskBar />
    </div>
  );
}
